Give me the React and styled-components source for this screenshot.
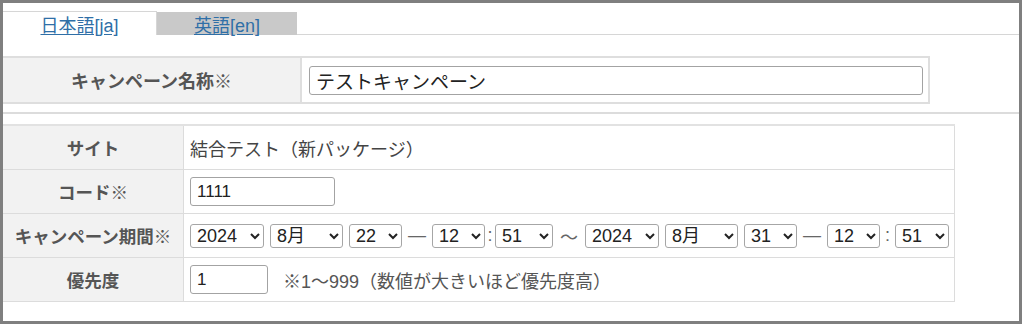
import React from 'react'
import styled, { createGlobalStyle } from 'styled-components'

const GlobalStyle = createGlobalStyle`
    body{
        margin:0;
        background:#fff;
        font-family:"Liberation Sans", "Noto Sans CJK JP", sans-serif;
        color:#333;
    }
`;

const years = ['2023', '2024', '2025']
const months = ['1月', '2月', '3月', '4月', '5月', '6月', '7月', '8月', '9月', '10月', '11月', '12月']

const DateTime = ({ day, last }) => (
    <>
        <Select w={74} mr={6} defaultValue="2024">
            {years.map(y => <option key={y}>{y}</option>)}
        </Select>
        <Select w={73} mr={6} defaultValue="8月">
            {months.map(m => <option key={m}>{m}</option>)}
        </Select>
        <Select w={53} defaultValue={day}>
            <option>{day}</option>
        </Select>
        <Sep w={30}>—</Sep>
        <Select w={53} defaultValue="12">
            <option>12</option>
        </Select>
        <Sep w={last ? 15 : 10}>:</Sep>
        <Select w={last ? 54 : 58} defaultValue="51">
            <option>51</option>
        </Select>
    </>
)

const App = () => {
    return (
        <Frame>
            <GlobalStyle />
            <TabBar>
                <Tab active><a href="#ja">日本語[ja]</a></Tab>
                <Tab><a href="#en">英語[en]</a></Tab>
                <TabFiller />
            </TabBar>

            <NameTable>
                <tbody>
                    <tr>
                        <Label w={297} big>キャンペーン名称※</Label>
                        <Value>
                            <TextInput w={614} h={29} big defaultValue="テストキャンペーン" />
                        </Value>
                    </tr>
                </tbody>
            </NameTable>

            <Divider />

            <DetailTable>
                <tbody>
                    <tr>
                        <Label w={180}>サイト</Label>
                        <Value>結合テスト（新パッケージ）</Value>
                    </tr>
                    <tr>
                        <Label>コード※</Label>
                        <Value>
                            <TextInput w={145} h={29} defaultValue="1111" />
                        </Value>
                    </tr>
                    <tr>
                        <Label>キャンペーン期間※</Label>
                        <Value>
                            <Range>
                                <DateTime day="22" />
                                <Sep w={32}>〜</Sep>
                                <DateTime day="31" last />
                            </Range>
                        </Value>
                    </tr>
                    <tr>
                        <Label>優先度</Label>
                        <Value>
                            <Inline>
                                <TextInput w={78} h={29} defaultValue="1" />
                                <Note>※1〜999（数値が大きいほど優先度高）</Note>
                            </Inline>
                        </Value>
                    </tr>
                </tbody>
            </DetailTable>
        </Frame>
    )
}

const Frame = styled.div`
    width:1022px;
    height:324px;
    box-sizing:border-box;
    border:3px solid #7f7f7f;
    background:#fff;
    overflow:hidden;
`;
const TabBar = styled.div`
    display:flex;
    padding-top:8px;
    height:24px;
`;
const Tab = styled.div`
    box-sizing:border-box;
    width:${p => p.active ? 154 : 140}px;
    height:${p => p.active ? 24 : 23}px;
    margin-top:${p => p.active ? 0 : 1}px;
    background:${p => p.active ? '#fff' : '#c9c9c9'};
    border-top:${p => p.active ? '1px solid #d6d6d6' : 'none'};
    border-right:${p => p.active ? '1px solid #d6d6d6' : 'none'};
    display:flex;
    align-items:center;
    justify-content:center;
    a{
        color:#2f6fa7;
        font-size:18px;
        text-decoration:underline;
        text-underline-offset:2px;
    }
`;
const TabFiller = styled.div`
    flex:1;
    border-bottom:1px solid #d6d6d6;
`;
const NameTable = styled.table`
    margin-top:21px;
    width:927px;
    table-layout:fixed;
    border-collapse:collapse;
    td{
        border:2px solid #dedede;
        border-left:none;
        height:44px;
        padding:0 0 0 7px;
    }
`;
const DetailTable = styled.table`
    margin-top:10px;
    width:952px;
    table-layout:fixed;
    border-collapse:collapse;
    td{
        border:1px solid #dcdcdc;
        border-left:none;
        height:43px;
        padding:0 0 0 6px;
    }
    tr:first-child td{
        border-top:2px solid #e2e2e2;
    }
`;
const Label = styled.td`
    ${p => p.w ? `width:${p.w}px;` : ''}
    background:#f2f2f2;
    color:#555;
    font-weight:bold;
    font-size:${p => p.big ? 18 : 17.5}px;
    text-align:center;
    white-space:nowrap;
    overflow:hidden;
    && {
        padding:0;
    }
`;
const Value = styled.td`
    font-size:18px;
    color:#444;
    white-space:nowrap;
`;
const Divider = styled.div`
    margin-top:8px;
    border-top:2px solid #dcdcdc;
`;
const TextInput = styled.input`
    box-sizing:border-box;
    width:${p => p.w}px;
    height:${p => p.h}px;
    border:1px solid #a3a3a3;
    border-radius:3px;
    padding:0 6px;
    font-family:"Liberation Sans", "Noto Sans CJK JP", sans-serif;
    font-size:${p => p.big ? 19 : 17}px;
    color:#222;
    display:block;
`;
const Range = styled.div`
    display:flex;
    align-items:center;
`;
const Select = styled.select`
    box-sizing:border-box;
    flex:none;
    width:${p => p.w}px;
    margin-right:${p => p.mr || 0}px;
    height:24px;
    border:1px solid #a6a6a6;
    border-radius:3px;
    background:#fff;
    padding:0 2px;
    font-family:"Liberation Sans", "Noto Sans CJK JP", sans-serif;
    font-size:18px;
    color:#222;
`;
const Sep = styled.span`
    flex:none;
    width:${p => p.w}px;
    text-align:center;
    color:#666;
    font-size:18px;
`;
const Inline = styled.div`
    display:flex;
    align-items:center;
    gap:15px;
`;
const Note = styled.span`
    color:#555;
    font-size:18px;
`;

export default App
